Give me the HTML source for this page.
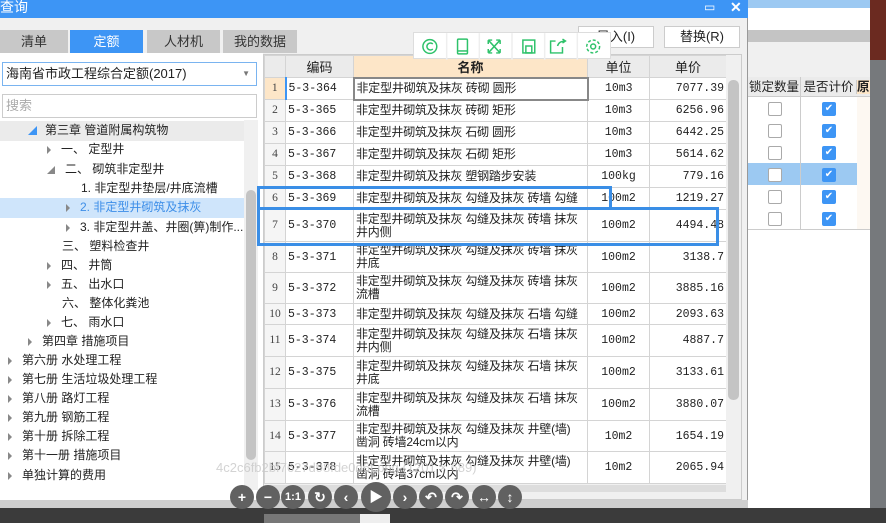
<!DOCTYPE html>
<html><head><meta charset="utf-8"><style>
*{margin:0;padding:0;box-sizing:border-box}
body{width:886px;height:523px;overflow:hidden;background:#76797c;font-family:"Liberation Sans","Noto Sans CJK SC",sans-serif;font-size:12px;color:#222;position:relative}
.a{position:absolute}
.tab{position:absolute;top:30px;height:23px;background:#c8c8c8;text-align:center;line-height:23px;font-size:13px;color:#333}
.tree div{position:absolute;font-size:12px;white-space:nowrap;height:19px;line-height:19px}
.tri{display:inline-block;width:0;height:0;border-left:4px solid #888;border-top:4px solid transparent;border-bottom:4px solid transparent;margin-right:10px;vertical-align:middle}
table{border-collapse:collapse;table-layout:fixed;position:absolute;left:264px;top:55px;width:462px;background:#fff}
td{border:1px solid #d4d4d4;font-family:"Liberation Mono","Noto Sans CJK SC",monospace;font-size:11.5px;line-height:13px;padding:0 2px;overflow:hidden;white-space:nowrap}
td.n{text-align:center;color:#444;background:#f5f5f5;font-family:"Liberation Serif",serif}
td.u{text-align:center}
td.p{text-align:right}
td.m{white-space:normal;font-family:"Liberation Sans","Noto Sans CJK SC",sans-serif;font-size:12px;letter-spacing:-0.2px}
th{border:1px solid #d4d4d4;background:#ebebeb;font-weight:normal;font-size:13px;height:22px}
.circ{position:absolute;width:24px;height:24px;border-radius:50%;background:#616161;color:#fff;text-align:center;line-height:24px;font-size:14px;font-weight:bold;top:485px}
.cb{position:absolute;width:14px;height:14px;border:1px solid #aaa;border-radius:2px;background:#fff}
.ck{position:absolute;width:14px;height:14px;border-radius:2px;background:#3d95f5;color:#fff;font-size:10px;line-height:14px;text-align:center}
</style></head><body>
<!-- right background app -->
<div class="a" style="left:748px;top:0;width:122px;height:508px;background:#fff"></div>
<div class="a" style="left:748px;top:0;width:122px;height:8px;background:#9cc9f2"></div>
<div class="a" style="left:748px;top:30px;width:122px;height:12px;background:#c4c4c4"></div>
<div class="a" style="left:748px;top:42px;width:122px;height:35px;background:#f0f0f0"></div>
<div class="a" style="left:870px;top:0;width:16px;height:60px;background:#6b2a20"></div>
<div class="a" style="left:748px;top:77px;width:122px;height:20px;background:#ebebeb;border-bottom:1px solid #ccc;font-size:12.5px;line-height:20px;white-space:nowrap"><span style="display:inline-block;width:52px;text-align:center">锁定数量</span><span style="display:inline-block;width:56px;text-align:center;border-left:1px solid #ccc">是否计价</span><span style="border-left:1px solid #ccc;background:#fde6c8;font-weight:bold">原</span></div>
<div class="a" style="left:748px;top:163px;width:122px;height:22px;background:#9cc9f2"></div>
<div class="a" style="left:857px;top:97px;width:13px;height:132px;background:#fdf8f2"></div>
<div class="a" style="left:800px;top:97px;width:1px;height:132px;background:#ccc"></div>
<div class="a" style="left:748px;top:229px;width:122px;height:1px;background:#ccc"></div>
<div class="cb" style="left:768px;top:102px"></div><div class="ck" style="left:822px;top:102px">✔</div>
<div class="cb" style="left:768px;top:124px"></div><div class="ck" style="left:822px;top:124px">✔</div>
<div class="cb" style="left:768px;top:146px"></div><div class="ck" style="left:822px;top:146px">✔</div>
<div class="cb" style="left:768px;top:168px"></div><div class="ck" style="left:822px;top:168px">✔</div>
<div class="cb" style="left:768px;top:190px"></div><div class="ck" style="left:822px;top:190px">✔</div>
<div class="cb" style="left:768px;top:212px"></div><div class="ck" style="left:822px;top:212px">✔</div>
<!-- dialog -->
<div class="a" style="left:0;top:0;width:748px;height:508px;background:#f0f0f0;border-right:1px solid #999"></div>
<div class="a" style="left:0;top:0;width:748px;height:18px;background:#3d95f5;color:#fff;font-size:14px;line-height:14px">查询<span style="position:absolute;left:704px;top:0;font-size:12px">▭</span><span style="position:absolute;left:730px;top:0;font-weight:bold">✕</span></div>
<div class="tab" style="left:0;width:68px">清单</div>
<div class="tab" style="left:70px;width:73px;background:#3d95f5;color:#fff">定额</div>
<div class="tab" style="left:147px;width:73px">人材机</div>
<div class="tab" style="left:223px;width:74px">我的数据</div>
<div class="a" style="left:0;top:53px;width:263px;height:447px;background:#fff"></div>
<div class="a" style="left:2px;top:62px;width:255px;height:24px;border:1px solid #7ab4f0;background:#fff;font-size:13px;line-height:22px;padding-left:3px">海南省市政工程综合定额(2017)<span style="position:absolute;right:6px;color:#777;font-size:8px">▼</span></div>
<div class="a" style="left:2px;top:94px;width:255px;height:24px;border:1px solid #ccc;background:#fff;font-size:13px;line-height:22px;padding-left:3px;color:#aaa">搜索</div>
<div class="a" style="left:0;top:121px;width:244px;height:20px;background:#ebebeb"></div>
<div class="a" style="left:0;top:198px;width:244px;height:20px;background:#cfe5fb"></div>
<div class="a" style="left:244px;top:120px;width:14px;height:370px;background:#f0f0f0"></div>
<div class="a" style="left:246px;top:190px;width:10px;height:270px;background:#c4c4c4;border-radius:5px"></div>
<div class="tree">
<div style="left:28px;top:121px"><span style="color:#3d95f5;font-size:9px;margin-right:8px">◢</span>第三章 管道附属构筑物</div>
<div style="left:47px;top:140px"><span class="tri"></span>一、 定型井</div>
<div style="left:47px;top:160px"><span style="color:#888;font-size:8px;margin-right:10px">◢</span>二、 砌筑非定型井</div>
<div style="left:81px;top:179px">1. 非定型井垫层/井底流槽</div>
<div style="left:66px;top:198px;color:#3d8ee8"><span class="tri"></span>2. 非定型井砌筑及抹灰</div>
<div style="left:66px;top:218px"><span class="tri"></span>3. 非定型井盖、井圈(箅)制作...</div>
<div style="left:62px;top:237px">三、 塑料检查井</div>
<div style="left:47px;top:256px"><span class="tri"></span>四、 井筒</div>
<div style="left:47px;top:275px"><span class="tri"></span>五、 出水口</div>
<div style="left:62px;top:294px">六、 整体化粪池</div>
<div style="left:47px;top:313px"><span class="tri"></span>七、 雨水口</div>
<div style="left:28px;top:332px"><span class="tri"></span>第四章 措施项目</div>
<div style="left:8px;top:351px"><span class="tri"></span>第六册 水处理工程</div>
<div style="left:8px;top:370px"><span class="tri"></span>第七册 生活垃圾处理工程</div>
<div style="left:8px;top:389px"><span class="tri"></span>第八册 路灯工程</div>
<div style="left:8px;top:408px"><span class="tri"></span>第九册 钢筋工程</div>
<div style="left:8px;top:427px"><span class="tri"></span>第十册 拆除工程</div>
<div style="left:8px;top:446px"><span class="tri"></span>第十一册 措施项目</div>
<div style="left:8px;top:466px"><span class="tri"></span>单独计算的费用</div>
</div>
<!-- buttons -->
<div class="a" style="left:578px;top:26px;width:76px;height:22px;border:1px solid #ccc;background:#fff;text-align:center;line-height:20px;font-size:13px">导入(I)</div>
<div class="a" style="left:664px;top:26px;width:76px;height:22px;border:1px solid #ccc;background:#fff;text-align:center;line-height:20px;font-size:13px">替换(R)</div>
<!-- table -->
<div class="a" style="left:263px;top:54px;width:479px;height:446px;background:#f0f0f0;border:1px solid #ccc"></div>
<table>
<colgroup><col style="width:21px"><col style="width:68px"><col style="width:234px"><col style="width:62px"><col style="width:77px"></colgroup>
<tr><th></th><th>编码</th><th style="background:#fde6c8;font-weight:bold">名称</th><th>单位</th><th>单价</th></tr>
<tr style="height:22px"><td class="n" style="background:#fde6c8">1</td><td style="border-left:2px solid #3d95f5">5-3-364</td><td class="m" style="border:2px solid #888">非定型井砌筑及抹灰 砖砌 圆形</td><td class="u">10m3</td><td class="p">7077.39</td></tr>
<tr style="height:22px"><td class="n">2</td><td>5-3-365</td><td class="m">非定型井砌筑及抹灰 砖砌 矩形</td><td class="u">10m3</td><td class="p">6256.96</td></tr>
<tr style="height:22px"><td class="n">3</td><td>5-3-366</td><td class="m">非定型井砌筑及抹灰 石砌 圆形</td><td class="u">10m3</td><td class="p">6442.25</td></tr>
<tr style="height:22px"><td class="n">4</td><td>5-3-367</td><td class="m">非定型井砌筑及抹灰 石砌 矩形</td><td class="u">10m3</td><td class="p">5614.62</td></tr>
<tr style="height:22px"><td class="n">5</td><td>5-3-368</td><td class="m">非定型井砌筑及抹灰 塑钢踏步安装</td><td class="u">100kg</td><td class="p">779.16</td></tr>
<tr style="height:22px"><td class="n">6</td><td>5-3-369</td><td class="m">非定型井砌筑及抹灰 勾缝及抹灰 砖墙 勾缝</td><td class="u">100m2</td><td class="p">1219.27</td></tr>
<tr style="height:32px"><td class="n">7</td><td>5-3-370</td><td class="m">非定型井砌筑及抹灰 勾缝及抹灰 砖墙 抹灰 井内侧</td><td class="u">100m2</td><td class="p">4494.48</td></tr>
<tr style="height:31px"><td class="n">8</td><td>5-3-371</td><td class="m">非定型井砌筑及抹灰 勾缝及抹灰 砖墙 抹灰 井底</td><td class="u">100m2</td><td class="p">3138.7</td></tr>
<tr style="height:31px"><td class="n">9</td><td>5-3-372</td><td class="m">非定型井砌筑及抹灰 勾缝及抹灰 砖墙 抹灰 流槽</td><td class="u">100m2</td><td class="p">3885.16</td></tr>
<tr style="height:21px"><td class="n">10</td><td>5-3-373</td><td class="m">非定型井砌筑及抹灰 勾缝及抹灰 石墙 勾缝</td><td class="u">100m2</td><td class="p">2093.63</td></tr>
<tr style="height:32px"><td class="n">11</td><td>5-3-374</td><td class="m">非定型井砌筑及抹灰 勾缝及抹灰 石墙 抹灰 井内侧</td><td class="u">100m2</td><td class="p">4887.7</td></tr>
<tr style="height:32px"><td class="n">12</td><td>5-3-375</td><td class="m">非定型井砌筑及抹灰 勾缝及抹灰 石墙 抹灰 井底</td><td class="u">100m2</td><td class="p">3133.61</td></tr>
<tr style="height:32px"><td class="n">13</td><td>5-3-376</td><td class="m">非定型井砌筑及抹灰 勾缝及抹灰 石墙 抹灰 流槽</td><td class="u">100m2</td><td class="p">3880.07</td></tr>
<tr style="height:31px"><td class="n">14</td><td>5-3-377</td><td class="m">非定型井砌筑及抹灰 勾缝及抹灰 井壁(墙) 凿洞 砖墙24cm以内</td><td class="u">10m2</td><td class="p">1654.19</td></tr>
<tr style="height:32px"><td class="n">15</td><td>5-3-378</td><td class="m">非定型井砌筑及抹灰 勾缝及抹灰 井壁(墙) 凿洞 砖墙37cm以内</td><td class="u">10m2</td><td class="p">2065.94</td></tr>
</table>
<div class="a" style="left:726px;top:55px;width:15px;height:435px;background:#f0f0f0"></div>
<div class="a" style="left:728px;top:80px;width:11px;height:320px;background:#c4c4c4;border-radius:5px"></div>
<div class="a" style="left:264px;top:485px;width:462px;height:7px;background:#ddd"></div>
<!-- highlight boxes -->
<div class="a" style="left:257px;top:186px;width:355px;height:24px;border:3px solid #3a8ee6"></div>
<div class="a" style="left:257px;top:207px;width:462px;height:39px;border:3px solid #3a8ee6"></div>
<!-- floating toolbar -->
<div class="a" style="left:413px;top:32px;width:198px;height:27px;background:#fff;border:1px solid #ddd;display:flex">
<svg width="198" height="27" viewBox="0 0 198 27" fill="none" stroke="#2ec26a" stroke-width="1.5">
<circle cx="16" cy="13.5" r="7"/><path d="M19 11a3.5 3.5 0 1 0 0 5"/>
<line x1="33" y1="0" x2="33" y2="27" stroke="#eee"/>
<rect x="44" y="6" width="10" height="15" rx="1"/><line x1="44" y1="18" x2="54" y2="18"/>
<line x1="66" y1="0" x2="66" y2="27" stroke="#eee"/>
<path d="M75 7l12 13M87 7l-12 13M75 7h4M75 7v4M87 7h-4M87 7v4M75 20h4M75 20v-4M87 20h-4M87 20v-4"/>
<line x1="99" y1="0" x2="99" y2="27" stroke="#eee"/>
<rect x="110" y="7" width="12" height="13"/><rect x="113" y="13" width="6" height="7"/>
<line x1="132" y1="0" x2="132" y2="27" stroke="#eee"/>
<path d="M150 14v6h-12v-12h5M145 13c1-4 4-5 8-5M150 6l3 2-3 2"/>
<line x1="165" y1="0" x2="165" y2="27" stroke="#eee"/>
<circle cx="181" cy="13.5" r="2.5"/><circle cx="181" cy="13.5" r="6.5" stroke-dasharray="3 2"/>
</svg></div>
<!-- watermark -->
<div class="a" style="left:216px;top:460px;color:rgba(200,200,200,0.8);font-size:13px;white-space:nowrap">4c2c6fb2bf7627d98fde0d6f.png (1201 × 689)</div>
<!-- bottom -->
<div class="a" style="left:0;top:500px;width:748px;height:8px;background:#cfcfcf"></div>
<div class="a" style="left:0;top:508px;width:886px;height:15px;background:#3b3b3b"></div>
<div class="a" style="left:264px;top:514px;width:126px;height:9px;background:#777"></div>
<div class="a" style="left:360px;top:514px;width:30px;height:9px;background:#eee"></div>
<div class="circ" style="left:230px">+</div>
<div class="circ" style="left:256px">−</div>
<div class="circ" style="left:281px;font-size:11px">1:1</div>
<div class="circ" style="left:308px">↻</div>
<div class="circ" style="left:334px">‹</div>
<div class="circ" style="left:361px;top:482px;width:30px;height:30px;line-height:30px">▶</div>
<div class="circ" style="left:393px">›</div>
<div class="circ" style="left:419px">↶</div>
<div class="circ" style="left:445px">↷</div>
<div class="circ" style="left:472px">↔</div>
<div class="circ" style="left:498px">↕</div>
</body></html>
